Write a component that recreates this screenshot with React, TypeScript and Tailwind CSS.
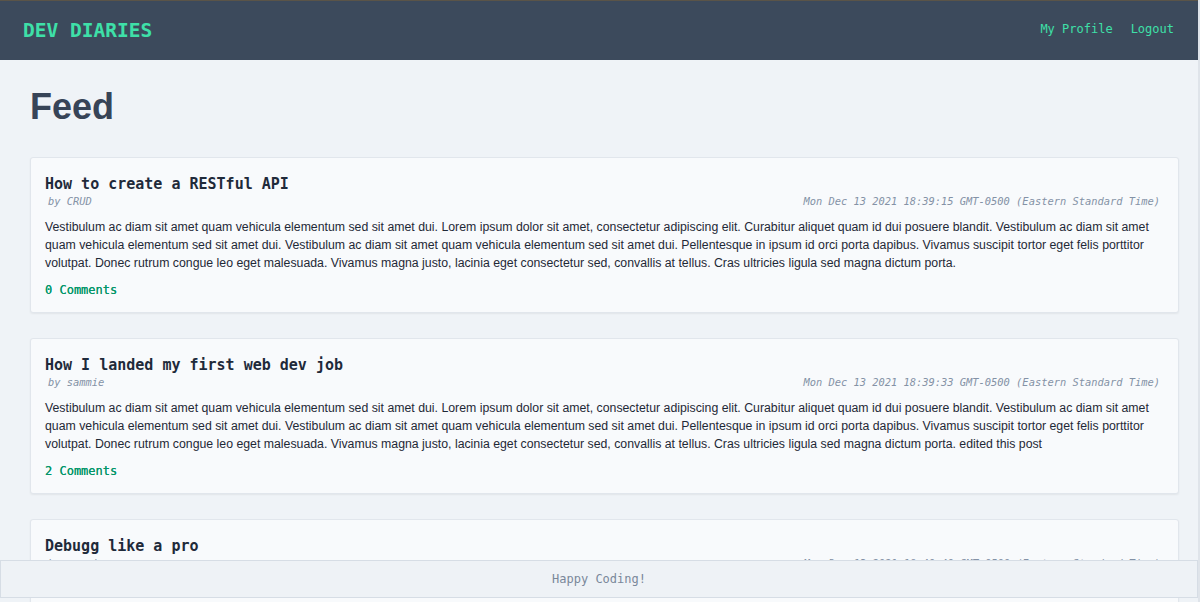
import React from "react";

const mono = { fontFamily: '"DejaVu Sans Mono", "Liberation Mono", monospace' };

const body =
  "Vestibulum ac diam sit amet quam vehicula elementum sed sit amet dui. Lorem ipsum dolor sit amet, consectetur adipiscing elit. Curabitur aliquet quam id dui posuere blandit. Vestibulum ac diam sit amet quam vehicula elementum sed sit amet dui. Vestibulum ac diam sit amet quam vehicula elementum sed sit amet dui. Pellentesque in ipsum id orci porta dapibus. Vivamus suscipit tortor eget felis porttitor volutpat. Donec rutrum congue leo eget malesuada. Vivamus magna justo, lacinia eget consectetur sed, convallis at tellus. Cras ultricies ligula sed magna dictum porta.";

const posts = [
  { title: "How to create a RESTful API", author: "CRUD", date: "Mon Dec 13 2021 18:39:15 GMT-0500 (Eastern Standard Time)", text: body, comments: "0 Comments" },
  { title: "How I landed my first web dev job", author: "sammie", date: "Mon Dec 13 2021 18:39:33 GMT-0500 (Eastern Standard Time)", text: body + " edited this post", comments: "2 Comments" },
  { title: "Debugg like a pro", author: "sammie", date: "Mon Dec 13 2021 18:40:40 GMT-0500 (Eastern Standard Time)", text: body, comments: "1 Comments" },
];

export default function App() {
  return (
    <div className="min-h-screen bg-[#eff3f7] border-r-2 border-[#dfe4ea] font-['Liberation_Sans',Arial,sans-serif]">
      <header className="h-[60px] bg-[#3c4a5c] border-t border-[#5a5448] flex items-center justify-between pl-[23px] pr-[24px] font-['DejaVu_Sans_Mono',monospace]">
        <h1 className="text-[19.5px] font-bold text-[#3ee0a8]">DEV DIARIES</h1>
        <nav className="flex gap-[18px] text-[12px] text-[#3ee0a8] -mt-[4px]">
          <span>My Profile</span>
          <span>Logout</span>
        </nav>
      </header>
      <main className="pl-[30px] pr-[19px] pb-[80px]">
        <h2 className="mt-[27px] text-[36px] leading-[40px] font-bold text-[#374457]">Feed</h2>
        <div className="mt-[30px] flex flex-col gap-[25px]">
          {posts.map((p) => (
            <article key={p.title} className="bg-[#f8fafc] border border-[#e1e6ec] rounded-[3px] shadow-[0_1px_2px_rgba(0,0,0,0.06)] pt-[16px] pb-[14px] pl-[14px] pr-[18px]">
              <h3 className="text-[15px] leading-[20px] font-bold text-[#1f2a3a]" style={mono}>{p.title}</h3>
              <div className="flex justify-between text-[10.4px] leading-[14px] italic text-[#8492a6]" style={mono}>
                <span className="pl-[3px]">by {p.author}</span>
                <span>{p.date}</span>
              </div>
              <p className="mt-[10px] text-[12.3px] leading-[18px] text-[#1f2937]">{p.text}</p>
              <div className="mt-[10px] text-[12px] leading-[16px] text-[#059669] [text-shadow:0_0_0.4px_#059669]" style={mono}>{p.comments}</div>
            </article>
          ))}
        </div>
      </main>
      <footer className="fixed left-0 right-[2px] bottom-[4px] h-[38px] bg-[#eef2f6] border border-[#d6dde5] flex items-center justify-center text-[12px] text-[#7a889a] font-['DejaVu_Sans_Mono',monospace]">
        Happy Coding!
      </footer>
    </div>
  );
}
